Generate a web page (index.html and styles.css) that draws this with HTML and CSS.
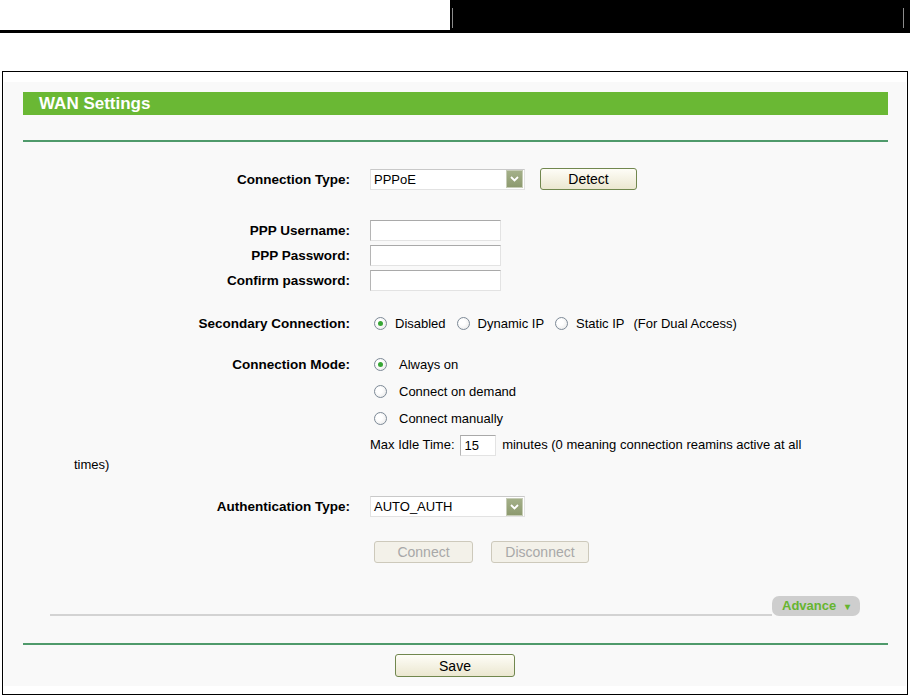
FILE: index.html
```html
<!DOCTYPE html>
<html lang="en">
<head>
  <meta charset="UTF-8">
  <title>WAN Settings</title>
  <link rel="stylesheet" href="styles.css">
</head>
<body>
  <div class="topbar">
    <div class="topbar-left"></div>
    <div class="topbar-right"><div class="topbar-inner"></div></div>
  </div>

  <div class="frame">
    <div class="panel">
      <div class="title">WAN Settings</div>
      <div class="rule"></div>

      <div class="row row-type">
        <label class="lbl">Connection Type:</label>
        <div class="val">
          <div class="select"><span>PPPoE</span><i class="arrow"><svg width="9" height="6" viewBox="0 0 9 6"><polyline points="1,1 4.5,4.5 8,1" fill="none" stroke="#fff" stroke-width="1.8"/></svg></i></div>
          <button class="btn detect">Detect</button>
        </div>
      </div>

      <div class="account">
        <div class="row row-field">
          <label class="lbl">PPP Username:</label>
          <div class="val"><input class="text" type="text"></div>
        </div>
        <div class="row row-field">
          <label class="lbl">PPP Password:</label>
          <div class="val"><input class="text" type="password"></div>
        </div>
        <div class="row row-field">
          <label class="lbl">Confirm password:</label>
          <div class="val"><input class="text" type="password"></div>
        </div>
      </div>

      <div class="row row-second">
        <label class="lbl">Secondary Connection:</label>
        <div class="val radios">
          <input class="radio" type="radio" name="sec" checked><span class="opt">Disabled</span>
          <input class="radio" type="radio" name="sec"><span class="opt">Dynamic IP</span>
          <input class="radio" type="radio" name="sec"><span class="opt">Static IP</span>
          <span class="note">(For Dual Access)</span>
        </div>
      </div>

      <div class="mode">
        <div class="row row-mode">
          <label class="lbl">Connection Mode:</label>
          <div class="val"><input class="radio" type="radio" name="mode" checked><span class="opt wide">Always on</span></div>
        </div>
        <div class="row row-mode">
          <span></span>
          <div class="val"><input class="radio" type="radio" name="mode"><span class="opt wide">Connect on demand</span></div>
        </div>
        <div class="row row-mode">
          <span></span>
          <div class="val"><input class="radio" type="radio" name="mode"><span class="opt wide">Connect manually</span></div>
        </div>
      </div>

      <p class="idle">Max Idle Time:<input class="text short" type="text" value="15"> minutes (0 meaning connection reamins active at all<br>times)</p>

      <div class="row row-auth">
        <label class="lbl">Authentication Type:</label>
        <div class="val">
          <div class="select"><span>AUTO_AUTH</span><i class="arrow"><svg width="9" height="6" viewBox="0 0 9 6"><polyline points="1,1 4.5,4.5 8,1" fill="none" stroke="#fff" stroke-width="1.8"/></svg></i></div>
        </div>
      </div>

      <div class="row row-actions">
        <span></span>
        <div class="val">
          <button class="btn off connect" disabled>Connect</button>
          <button class="btn off disconnect" disabled>Disconnect</button>
        </div>
      </div>

      <div class="advance-bar">
        <div class="advance-line"></div>
        <div class="advance">Advance <span class="caret">&#9662;</span></div>
      </div>

      <div class="rule rule-bottom"></div>

      <div class="save-row"><button class="btn save">Save</button></div>
    </div>
  </div>
</body>
</html>
```

FILE: styles.css
```css
body {
  margin: 0;
  font-family: "Liberation Sans", Arial, sans-serif;
  font-size: 13px;
  color: #000;
  background: #fff;
}

/* page header strip */
.topbar {
  display: flex;
  height: 33px;
}
.topbar-left {
  width: 450px;
  box-sizing: border-box;
  border-bottom: 3px solid #000;
}
.topbar-right {
  flex: 1;
  background: #000;
  padding: 8px 6px 5px 2px;
}
.topbar-inner {
  height: 100%;
  border-left: 1px solid #8c8c8c;
  border-right: 1px solid #8c8c8c;
}

/* outer box */
.frame {
  box-sizing: border-box;
  width: 906px;
  height: 624px;
  margin: 38px 0 0 2px;
  border: 1px solid #000;
  padding: 10px 1px 8px 1px;
}
.panel {
  background: #f9f9f9;
  height: 604px;
  overflow: hidden;
}
.title {
  margin: 10px 18px 0 19px;
  height: 23px;
  line-height: 23px;
  padding-left: 16px;
  background: #6ab834;
  color: #fff;
  font-weight: bold;
  font-size: 17px;
}
.rule {
  margin: 25px 18px 0 19px;
  height: 2px;
  background: #4f9a6b;
}

/* form rows */
.row {
  display: grid;
  grid-template-columns: 346px auto;
  column-gap: 20px;
  align-items: center;
}
.lbl {
  text-align: right;
  font-weight: bold;
  font-size: 13.5px;
}
.val {
  display: flex;
  align-items: center;
}
.row-type {
  margin-top: 26px;
  height: 22px;
}
.account {
  margin-top: 28px;
}
.row-field {
  height: 25px;
}
.row-second {
  margin-top: 20px;
  height: 20px;
}
.mode {
  margin-top: 18px;
}
.row-mode {
  height: 27px;
}
.row-auth {
  margin-top: 21px;
  height: 21px;
}
.row-actions {
  margin-top: 24px;
  height: 22px;
}

/* controls */
.select {
  box-sizing: border-box;
  width: 155px;
  height: 21px;
  background: #fff;
  border: 1px solid #e2e2e2;
  border-top-color: #c9c9c9;
  display: flex;
  align-items: center;
  justify-content: space-between;
  padding: 0 0 0 3px;
  font-size: 13px;
}
.arrow {
  width: 17px;
  height: 18px;
  margin-right: 1px;
  background: linear-gradient(#a4b089, #8d9a6f);
  border: 1px solid #c6ccb6;
  box-sizing: border-box;
  display: flex;
  align-items: center;
  justify-content: center;
}
.text {
  box-sizing: border-box;
  width: 131px;
  height: 21px;
  margin: 0;
  border: 1px solid #e3e3e3;
  border-top-color: #a9a9a9;
  border-left-color: #b5b5b5;
  background: #fff;
  font: 13px "Liberation Sans", Arial, sans-serif;
  padding: 0 4px;
}
.text.short {
  width: 36px;
  margin: -1px 3px -1px 5px;
  vertical-align: middle;
}
.btn {
  box-sizing: border-box;
  height: 22px;
  border: 1px solid #71874e;
  border-radius: 3px;
  background: linear-gradient(#fefdf7, #ebe7d0);
  font: 14px "Liberation Sans", Arial, sans-serif;
  color: #000;
  padding: 0;
}
.detect {
  width: 97px;
  margin-left: 15px;
}
.btn.off {
  border-color: #cdc9bb;
  background: #f3f1e9;
  color: #a8a8a8;
}
.connect {
  width: 99px;
  margin-left: 4px;
}
.disconnect {
  width: 98px;
  margin-left: 18px;
}

.radio {
  appearance: none;
  box-sizing: border-box;
  width: 13px;
  height: 13px;
  margin: 0 0 0 4px;
  border-radius: 50%;
  border: 1px solid #7d8a97;
  background: radial-gradient(circle at 40% 40%, #fff 30%, #e4e4e4);
  position: relative;
}
.radio:checked::after {
  content: "";
  position: absolute;
  left: 3px;
  top: 3px;
  width: 5px;
  height: 5px;
  border-radius: 50%;
  background: #37a635;
}
.opt {
  margin-left: 8px;
  margin-right: 7px;
}
.opt.wide {
  margin-left: 12px;
}
.note {
  margin-left: 2px;
}

.idle {
  margin: 3px 0 0 0;
  padding-left: 70px;
  text-indent: 296px;
  line-height: 20px;
  white-space: nowrap;
}

/* advance toggle */
.advance-bar {
  margin: 33px 46px 0 46px;
  height: 20px;
  display: flex;
  align-items: flex-end;
}
.advance-line {
  flex: 1;
  height: 2px;
  background: #d3d3d3;
}
.advance {
  width: 88px;
  height: 20px;
  box-sizing: border-box;
  padding-left: 10px;
  line-height: 20px;
  border-radius: 7px;
  background: #cecece;
  color: #66b530;
  font-weight: bold;
  font-size: 13px;
}
.caret {
  font-size: 10px;
  margin-left: 5px;
}

.rule-bottom {
  margin-top: 27px;
}
.save-row {
  margin-top: 9px;
  display: flex;
  justify-content: center;
}
.save {
  width: 120px;
  height: 23px;
}
```
